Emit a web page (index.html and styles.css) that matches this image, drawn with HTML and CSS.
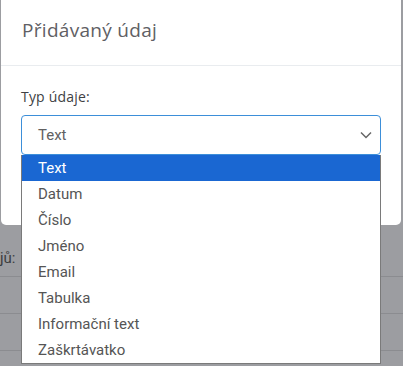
FILE: index.html
```html
<!DOCTYPE html>
<html lang="cs">
<head>
    <meta charset="UTF-8">
    <meta name="viewport" content="width=device-width, initial-scale=1.0">
    <title>Přidávaný údaj</title>
    <link rel="stylesheet" href="styles.css">
</head>
<body>
    <div id="page">
        <div class="page-spacer"></div>
        <div class="page-row">jů:</div>
        <div class="page-row"></div>
        <div class="page-row"></div>
    </div>

    <div id="modal">
        <div class="modal-header">
            <h2>Přidávaný údaj</h2>
        </div>
        <div class="modal-body">
            <label class="field-label">Typ údaje:</label>
            <div class="select-box">
                <span>Text</span>
                <svg class="chevron" width="12" height="8" viewBox="0 0 12 8">
                    <path d="M1 1.5 L6 6.5 L11 1.5" fill="none" stroke="#666" stroke-width="1.5"/>
                </svg>
                <ul class="option-list">
                    <li class="selected">Text</li>
                    <li>Datum</li>
                    <li>Číslo</li>
                    <li>Jméno</li>
                    <li>Email</li>
                    <li>Tabulka</li>
                    <li>Informační text</li>
                    <li>Zaškrtávatko</li>
                </ul>
            </div>
        </div>
    </div>
</body>
</html>
```

FILE: styles.css
```css
body {
    margin: 0;
    padding: 0;
    background-color: #9c9da1;
    font-family: Roboto, "Liberation Sans", sans-serif;
    height: 366px;
    overflow: hidden;
    position: relative;
}

#page {
    color: #3c3d40;
    font-size: 15px;
}

.page-spacer {
    height: 240px;
}

.page-row {
    height: 37px;
    line-height: 36px;
    border-bottom: 1px solid #8b8c90;
    box-sizing: border-box;
}

#modal {
    position: absolute;
    top: -6px;
    left: 1px;
    width: 400px;
    height: 231px;
    background-color: #fff;
    border-radius: 5px;
}

.modal-header {
    height: 72px;
    box-sizing: border-box;
    padding: 23px 21px 0;
    border-bottom: 1px solid #e9ecef;
}

.modal-header h2 {
    margin: 0;
    font-family: "Open Sans", sans-serif;
    font-weight: 400;
    font-size: 19px;
    color: #5f6064;
    letter-spacing: 0.3px;
}

.modal-body {
    padding: 21px 20px;
}

.field-label {
    display: block;
    font-family: "Open Sans", sans-serif;
    font-size: 14px;
    color: #404144;
    margin-bottom: 9px;
    letter-spacing: 0.2px;
}

.select-box {
    position: relative;
    height: 40px;
    box-sizing: border-box;
    border: 1px solid #3d8fd9;
    border-radius: 4px;
    padding: 0 16px;
    display: flex;
    align-items: center;
    justify-content: space-between;
    font-size: 15px;
    color: #616161;
}

.chevron {
    margin-right: -8px;
}

.option-list {
    position: absolute;
    top: 39px;
    left: -1px;
    right: -1px;
    margin: 0;
    padding: 0;
    list-style: none;
    background-color: #fff;
    border: 1px solid #7a7a7a;
    border-top: none;
}

.option-list li {
    height: 26px;
    line-height: 26px;
    padding-left: 16px;
    color: #555;
    font-size: 15px;
}

.option-list li.selected {
    background-color: #1a67d2;
    color: #fff;
}
```
